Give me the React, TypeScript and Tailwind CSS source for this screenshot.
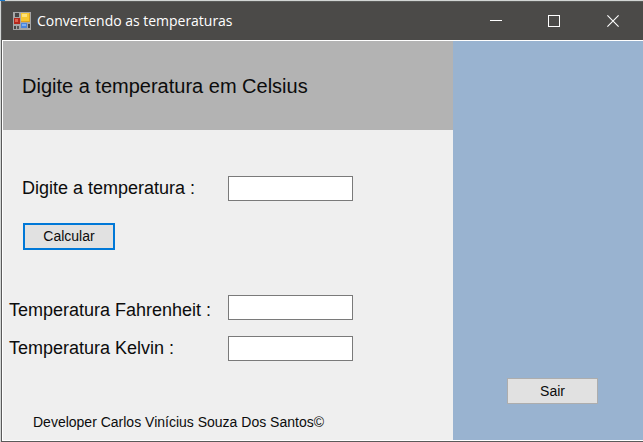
import React from "react";

function FormIcon() {
  return (
    <svg width="18" height="18" viewBox="0 0 18 18" shapeRendering="crispEdges">
      <rect width="18" height="18" fill="#a6a6a6" />
      <rect x="2" y="1" width="4" height="4" fill="#454545" />
      <rect x="8" y="1" width="9" height="9" fill="#e0a21c" />
      <rect x="8" y="1" width="8" height="8" fill="#f7c72f" />
      <rect x="9" y="2" width="5" height="3" fill="#ffe27a" />
      <rect x="1" y="6" width="6" height="6" fill="#b3271b" />
      <rect x="2" y="7" width="3" height="3" fill="#e0604c" />
      <rect x="1" y="14" width="2" height="3" fill="#454545" />
      <rect x="4" y="14" width="2" height="3" fill="#555555" />
      <rect x="8" y="11" width="6" height="5" fill="#4b86dc" />
      <rect x="9" y="12" width="4" height="2" fill="#7db0f5" />
      <rect x="15" y="12" width="2" height="4" fill="#454545" />
    </svg>
  );
}

function TitleBar() {
  return (
    <header className="flex h-[39px] shrink-0 items-center bg-[#4b4a48] pl-[11px] shadow-[inset_0_1px_0_#5c5d5b]">
      <FormIcon />
      <h1 className="ml-[6px] flex-1 whitespace-nowrap font-['Open_Sans',sans-serif] text-[14px] tracking-[-0.02px] text-white">
        Convertendo as temperaturas
      </h1>
      <button aria-label="Minimizar" className="mr-[46px]">
        <svg width="12" height="12" shapeRendering="crispEdges">
          <rect y="5" width="12" height="1" fill="#fff" />
        </svg>
      </button>
      <button aria-label="Maximizar" className="mr-[47px]">
        <svg width="12" height="12" shapeRendering="crispEdges">
          <rect x=".5" y=".5" width="11" height="11" fill="none" stroke="#fff" />
        </svg>
      </button>
      <button aria-label="Fechar" className="mr-[24px]">
        <svg width="12" height="12">
          <path d="M.4 .4L11.6 11.6M11.6 .4L.4 11.6" stroke="#fff" strokeWidth="1.1" />
        </svg>
      </button>
    </header>
  );
}

function Field({ label }: { label: string }) {
  return <input aria-label={label} className="block h-[25px] w-[125px] shrink-0 border border-[#7a7a7a] bg-white px-1 text-sm" />;
}

export default function App() {
  return (
    <div className="flex h-[442px] w-[643px] flex-col overflow-hidden bg-[#d2d5d4] font-['Liberation_Sans',Arial,sans-serif] text-[#0c0c0c]">
      <div className="h-px w-[5px] shrink-0 bg-[#1979ca]" />
      <div className="ml-px flex min-h-0 flex-1 flex-col border-b border-l border-[#5a5a5a]">
        <TitleBar />
        <div className="flex min-h-0 flex-1 border-b border-l border-t border-white">
          <main className="flex w-[450px] shrink-0 flex-col bg-[#efefef]">
            <div className="flex h-[89px] items-center bg-[#b3b3b3] pl-[19px]">
              <h2 className="whitespace-nowrap text-[20px] leading-6">Digite a temperatura em Celsius</h2>
            </div>
            <div className="mt-[46px] flex h-[25px] items-center">
              <label className="w-[225px] whitespace-nowrap pl-[19px] text-[18px]">Digite a temperatura :</label>
              <Field label="Digite a temperatura" />
            </div>
            <button className="ml-[20px] mt-[22px] flex h-[27px] w-[92px] items-center justify-center border-2 border-[#0078d7] bg-[#e1e1e1] text-[14px]">
              <span>Calcular</span>
            </button>
            <div className="mt-[45px] flex h-[25px] items-center">
              <label className="w-[225px] whitespace-nowrap pl-[6px] pt-[5px] text-[18px]">Temperatura Fahrenheit :</label>
              <Field label="Temperatura Fahrenheit" />
            </div>
            <div className="mt-[16px] flex h-[25px] items-center">
              <label className="w-[225px] whitespace-nowrap pl-[6px] text-[18px]">Temperatura Kelvin :</label>
              <Field label="Temperatura Kelvin" />
            </div>
            <p className="ml-[30px] mt-[51px] whitespace-nowrap text-[14px] leading-5">
              <span>Developer Carlos Vinícius Souza Dos Santos©</span>
            </p>
          </main>
          <aside className="flex flex-1 flex-col items-start justify-end bg-[#99b3d0] pb-[36px] pl-[54px]">
            <button className="flex h-[26px] w-[91px] items-center justify-center border border-[#adadad] bg-[#e1e1e1] text-[14px]">
              <span>Sair</span>
            </button>
          </aside>
        </div>
      </div>
    </div>
  );
}
